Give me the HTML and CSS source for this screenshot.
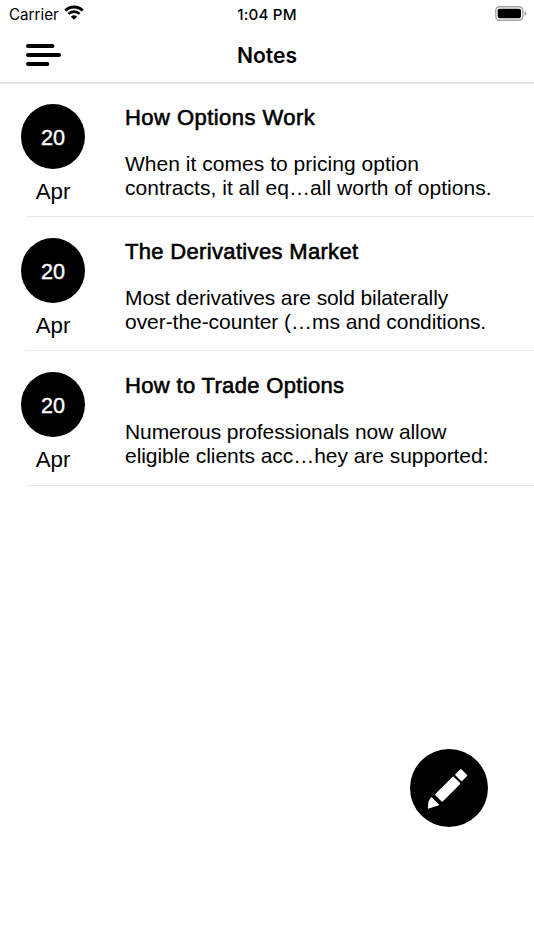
FILE: index.html
```html
<!DOCTYPE html>
<html lang="en">
<head>
    <meta charset="UTF-8">
    <meta name="viewport" content="width=device-width, initial-scale=1.0">
    <title>Notes</title>
    <link rel="stylesheet" href="styles.css">
</head>
<body>
    <div class="status-bar">
        <div class="carrier">
            <span>Carrier</span>
            <svg class="wifi" width="20" height="15" viewBox="0 0 20 15">
                <path d="M1.3 5.5a12.4 12.4 0 0 1 17.4 0" fill="none" stroke="#000" stroke-width="3"/>
                <path d="M4.4 8.9a8 8 0 0 1 11.2 0" fill="none" stroke="#000" stroke-width="2.7"/>
                <path d="M10 14.8 L6.9 11.8a4.5 4.5 0 0 1 6.2 0z"/>
            </svg>
        </div>
        <span class="time">1:04 PM</span>
        <svg class="battery" width="32" height="15" viewBox="0 0 32 15">
            <rect x=".8" y=".8" width="27" height="13.4" rx="3.6" fill="none" stroke="#a3a3a3" stroke-width="1.4"/>
            <rect x="2.7" y="2.7" width="23.3" height="9.6" rx="1.8"/>
            <path d="M29.5 5v5c1.2-.4 1.9-1.4 1.9-2.5S30.7 5.4 29.5 5z" fill="#a3a3a3"/>
        </svg>
    </div>

    <header class="nav-bar">
        <button class="menu-btn" aria-label="Menu">
            <svg width="36" height="24" viewBox="0 0 36 24">
                <path d="M2 2.9h24.5M2 12h31M2 21h19.4" fill="none" stroke="#000" stroke-width="4" stroke-linecap="round"/>
            </svg>
        </button>
        <h1>Notes</h1>
    </header>

    <main class="notes">
        <article class="note">
            <div class="date">
                <div class="day">20</div>
                <div class="month">Apr</div>
            </div>
            <div class="note-text">
                <h2 class="wide">How Options Work</h2>
                <p>When it comes to pricing option<br>contracts, it all eq…all worth of options.</p>
            </div>
        </article>
        <article class="note">
            <div class="date">
                <div class="day">20</div>
                <div class="month">Apr</div>
            </div>
            <div class="note-text">
                <h2>The Derivatives Market</h2>
                <p><span class="tight">Most derivatives are sold bilaterally</span><br><span class="snug">over-the-counter (…ms and conditions.</span></p>
            </div>
        </article>
        <article class="note">
            <div class="date">
                <div class="day">20</div>
                <div class="month">Apr</div>
            </div>
            <div class="note-text">
                <h2>How to Trade Options</h2>
                <p><span class="tight">Numerous professionals now allow</span><br><span class="snug">eligible clients acc…hey are supported:</span></p>
            </div>
        </article>
    </main>

    <button class="add-btn" aria-label="New note">
        <svg width="78" height="78" viewBox="0 0 78 78">
            <g fill="#fff" stroke="#fff" stroke-width="1.5" stroke-linejoin="round">
                <path d="M50.8 20.8l5.7 5.7-4.9 4.900-5.7-5.7z"/>
                <path d="M43.2 28.3l6.3 6.3-17.3 17.3-6.3-6.3z"/>
                <path d="M21.5 49l6.7 6.7-9.6 3.2.6-6.2z"/>
            </g>
        </svg>
    </button>
</body>
</html>
```

FILE: styles.css
```css
* {
    box-sizing: border-box;
}
body {
    font-family: "Liberation Sans", Arial, sans-serif;
    margin: 0;
    height: 950px;
    background-color: #fff;
    color: #000;
    overflow: hidden;
}
button {
    border: none;
    padding: 0;
    background: none;
    cursor: pointer;
}
svg {
    display: block;
}
.status-bar {
    display: grid;
    grid-template-columns: 1fr auto 1fr;
    align-items: center;
    height: 28px;
    padding: 0 7px 0 9px;
    font-family: Inter, sans-serif;
    font-size: 15.2px;
}
.carrier {
    display: flex;
    align-items: center;
    gap: 5px;
}
.wifi {
    margin-top: -3px;
}
.time {
    margin: 0 2px 0 0;
    font-weight: 550;
    letter-spacing: 0.2px;
}
.battery {
    justify-self: end;
    margin-top: -2px;
}
.nav-bar {
    display: grid;
    grid-template-columns: 1fr auto 1fr;
    align-items: center;
    height: 56px;
    padding: 0 26px;
    border-bottom: 2px solid #e2e2e2;
}
.menu-btn {
    justify-self: start;
}
.nav-bar h1 {
    margin: 0;
    font-family: Inter, sans-serif;
    font-size: 21.1px;
    font-weight: 600;
}

/* Notes list */
.notes {
    margin-top: -1px;
}
.note {
    display: flex;
    height: 134.2px;
    padding: 21px 0 0 21px;
    background: linear-gradient(#e8e8e8, #e8e8e8) 26px 100% / 100% 1px no-repeat;
}
.date {
    width: 64px;
    margin-right: 40px;
    text-align: center;
}
.day {
    height: 65px;
    line-height: 67px;
    border-radius: 50%;
    background-color: #000;
    color: #fff;
    font-size: 21.6px;
    -webkit-text-stroke: 0.4px #fff;
}
.month {
    margin-top: 10px;
    font-size: 22.3px;
    line-height: 25px;
}
.note-text {
    white-space: nowrap;
}
.note-text h2 {
    margin: 0;
    padding-top: 1px;
    font-size: 22px;
    font-weight: normal;
    line-height: 26px;
    letter-spacing: 0.33px;
    -webkit-text-stroke: 0.6px #000;
}
.note-text h2.wide {
    letter-spacing: 0.45px;
}
.note-text p {
    margin: 21px 0 0;
    font-size: 21px;
    line-height: 24px;
    letter-spacing: 0.03px;
}
.note-text .tight {
    letter-spacing: -0.1px;
}
.note-text .snug {
    letter-spacing: -0.05px;
}

/* Floating button */
.add-btn {
    position: absolute;
    right: 46px;
    bottom: 123px;
    width: 78px;
    height: 78px;
    border-radius: 50%;
    background-color: #000;
}
```
